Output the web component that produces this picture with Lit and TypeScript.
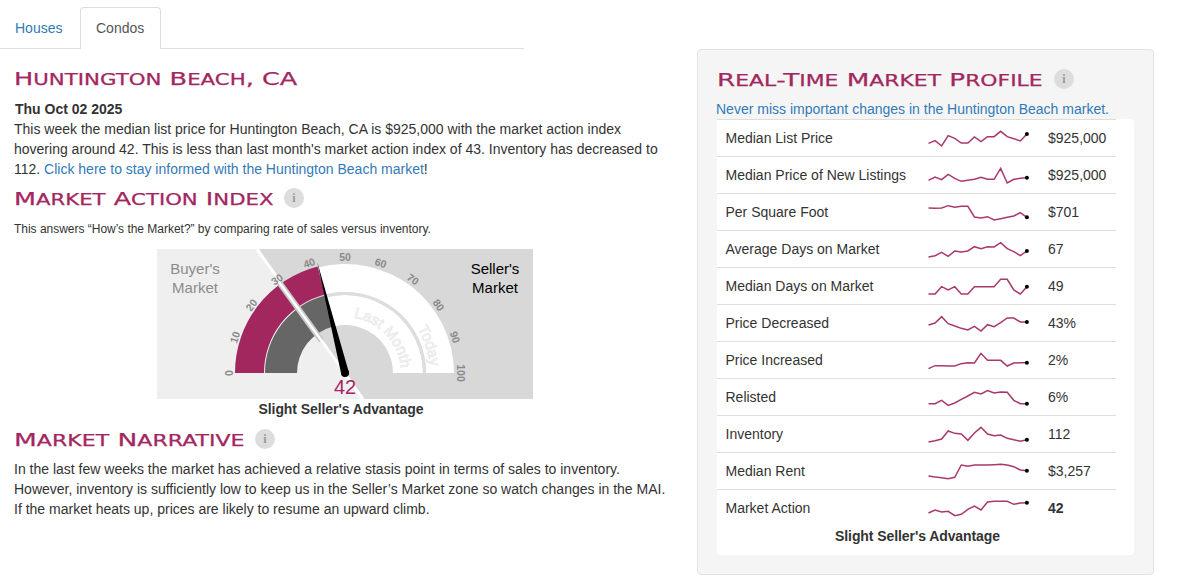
import { LitElement, html, css, svg } from "lit";
import { customElement } from "lit/decorators.js";

const PINK = "#a3275f";

// y values measured as 3x-zoom coordinates, with the row's top in the same units
const ROWS: { label: string; value: string; top: number; ys: number[]; bold?: boolean }[] = [
  { label: "Median List Price", value: "$925,000", top: -3, ys: [67,59,75,44,52,66,66,48,62,47,47,31,47,53,60,39] },
  { label: "Median Price of New Listings", value: "$925,000", top: 108, ys: [178,168,176,160,172,181,178,175,169,175,175,142,186,175,172,170] },
  { label: "Per Square Foot", value: "$701", top: 219, ys: [261,262,261,254,259,256,256,288,291,287,297,293,289,285,275,289] },
  { label: "Average Days on Market", value: "67", top: 330, ys: [408,404,394,406,390,393,390,377,383,377,378,365,383,392,404,390] },
  { label: "Median Days on Market", value: "49", top: -9, ys: [69,69,47,57,47,69,69,47,47,47,47,25,25,57,69,47] },
  { label: "Price Decreased", value: "43%", top: 102, ys: [162,156,137,158,165,172,177,166,180,161,167,155,141,141,153,153] },
  { label: "Price Increased", value: "2%", top: 213, ys: [293,284,284,285,285,278,275,276,247,268,268,268,285,276,275,275] },
  { label: "Relisted", value: "6%", top: 324, ys: [398,398,388,403,396,385,375,364,369,359,366,363,364,388,398,398] },
  { label: "Inventory", value: "112", top: 1, ys: [79,75,70,46,53,55,74,52,35,55,60,58,68,72,77,72] },
  { label: "Median Rent", value: "$3,257", top: 112, ys: [181,184,186,189,185,148,152,148,148,148,147,146,148,153,163,165] },
  { label: "Market Action", value: "42", top: 223, ys: [292,283,289,287,300,296,281,271,283,259,257,257,257,266,262,261], bold: true },
];

const CX = 188;
const CY = 124;

function polar(v: number, r: number): [number, number] {
  const a = Math.PI * (1 - v / 100);
  return [CX + r * Math.cos(a), CY - r * Math.sin(a)];
}

function band(v0: number, v1: number, r0: number, r1: number): string {
  const [ax, ay] = polar(v0, r1);
  const [bx, by] = polar(v1, r1);
  const [cx, cy] = polar(v1, r0);
  const [dx, dy] = polar(v0, r0);
  return `M${ax} ${ay}A${r1} ${r1} 0 0 1 ${bx} ${by}L${cx} ${cy}A${r0} ${r0} 0 0 0 ${dx} ${dy}Z`;
}

function heading(text: string, cls: string) {
  const parts = text.match(/[a-z]+|[^a-z]+/g) ?? [];
  return html`<span class="htext ${cls}">${parts.map((p) => (/^[a-z]/.test(p) ? html`<span class="sm">${p}</span>` : p))}</span>`;
}

function spark(top: number, ys: number[]) {
  const pts = ys.map((y, i) => [0.5 + i * 6.56, (y - top) / 3] as [number, number]);
  const last = pts[pts.length - 1];
  return html`<svg class="spark" width="120" height="36" viewBox="0 0 120 36">
    <polyline points=${pts.map((p) => p.join(",")).join(" ")} fill="none" stroke=${PINK} stroke-width="1.5" stroke-opacity="0.92"></polyline>
    <circle cx=${last[0]} cy=${last[1]} r="2" fill="#000"></circle>
  </svg>`;
}

function gauge() {
  const ticks = [0, 10, 20, 30, 40, 50, 60, 70, 80, 90, 100];
  const [b0x, b0y] = polar(30, 40);
  const [b1x, b1y] = polar(30, 113);
  const n = 42.2;
  const [tx, ty] = polar(n, 115);
  const a = Math.PI * (1 - n / 100);
  const px = Math.sin(a) * 3.9;
  const py = Math.cos(a) * 3.9;
  return html`<svg class="gauge" width="376" height="150" viewBox="0 0 376 150">
    <rect width="376" height="150" fill="#d8d8d8"></rect>
    <polygon points="0,0 100,0 206,150 0,150" fill="#efefef"></polygon>
    <line x1="100" y1="0" x2="206" y2="150" stroke="#fff" stroke-width="3"></line>
    <path d=${band(42, 100, 81, 109)} fill="#fff"></path>
    <path d=${band(42, 100, 48, 78)} fill="#fff"></path>
    <path d=${band(42, 100, 78, 81)} fill="#ddd"></path>
    <path d=${band(0, 42, 81, 110)} fill=${PINK}></path>
    <path d=${band(0, 42, 48, 80)} fill="#666"></path>
    <line x1=${b0x} y1=${b0y} x2=${b1x} y2=${b1y} stroke="#c9c9c9" stroke-width="6"></line>
    <line x1=${b0x} y1=${b0y} x2=${b1x} y2=${b1y} stroke="#fff" stroke-width="2.5"></line>
    ${ticks.map((t) => {
      const [x, y] = polar(t, 116);
      const rot = (t / 100) * 180 - 90;
      return svg`<text class="tick" x=${x} y=${y} transform="rotate(${rot} ${x} ${y})" text-anchor="middle" dominant-baseline="central">${t}</text>`;
    })}
    <path id="todayArc" d="M${CX + 72.4} ${CY - 44.5}A85 85 0 0 1 ${CX + 85} ${CY}" fill="none"></path>
    <path id="lastArc" d="M${CX + 8.8} ${CY - 55.3}A56 56 0 0 1 ${CX + 56} ${CY}" fill="none"></path>
    <text class="curved"><textPath href="#todayArc">Today</textPath></text>
    <text class="curved"><textPath href="#lastArc">Last Month</textPath></text>
    <text class="side buyer" x="38" y="25" text-anchor="middle">Buyer's</text>
    <text class="side buyer" x="38" y="44" text-anchor="middle">Market</text>
    <text class="side seller" x="338" y="25" text-anchor="middle">Seller's</text>
    <text class="side seller" x="338" y="44" text-anchor="middle">Market</text>
    <polygon points="${CX + px},${CY + py} ${CX - px},${CY - py} ${tx},${ty}" fill="#000"></polygon>
    <circle cx=${CX} cy=${CY} r="4" fill="#000"></circle>
    <text class="score" x="188" y="145" text-anchor="middle">42</text>
  </svg>`;
}

@customElement("app-root")
export class AppRoot extends LitElement {
  static styles = css`
    :host {
      display: block;
      width: 1183px;
      height: 586px;
      overflow: hidden;
      font-family: "Liberation Sans", Arial, sans-serif;
      font-size: 14px;
      line-height: 20px;
      color: #333;
      background: #fff;
    }
    a { color: #337ab7; text-decoration: none; }
    .page { display: grid; grid-template-columns: 697px 457px; }
    .left { padding-top: 7px; }
    .tabs {
      display: flex;
      width: 524px;
      height: 42px;
      box-sizing: border-box;
      border-bottom: 1px solid #ddd;
    }
    .tab { padding: 10px 15px; height: 42px; box-sizing: border-box; border: 1px solid transparent; border-bottom: 0; }
    .tab.houses { padding-left: 14px; padding-right: 15px; width: 80px; }
    .tab.active {
      width: 81px;
      color: #555;
      background: #fff;
      border-color: #ddd;
      border-radius: 4px 4px 0 0;
    }
    .content { width: 654px; padding-left: 14px; }
    h2 {
      margin: 0;
      display: flex;
      align-items: center;
      height: 20px;
      font-family: "DejaVu Sans", sans-serif;
      font-weight: 400;
      font-size: 18px;
      line-height: 20px;
      color: #a3275f;
      text-transform: uppercase;
      white-space: nowrap;
      -webkit-text-stroke: 0.25px #a3275f;
    }
    h2 .sm { font-size: 15px; }
    .htext { display: inline-block; height: 20px; line-height: 22px; transform-origin: left center; flex: none; }
    .w-title { width: 283px; transform: scaleX(1.42); }
    .w-mai { width: 258px; transform: scaleX(1.415); }
    .w-narr { width: 229px; transform: scaleX(1.47); }
    .w-prof { width: 325px; transform: scaleX(1.457); }
    .title { margin-top: 19px; }
    .date { margin: 11px 0 0 1px; font-weight: 700; }
    p { margin: 0; }
    .mai { margin-top: 9px; }
    .answers { margin-top: 11px; font-size: 12px; line-height: 20px; letter-spacing: -0.02px; }
    .gauge { display: block; margin: 10px 0 0 143px; }
    .gauge .tick { font: 700 10.5px "Liberation Sans", sans-serif; fill: #8a8a8a; }
    .gauge .side { font: 15px "Liberation Sans", sans-serif; }
    .gauge .buyer { fill: #8c8c8c; }
    .gauge .seller { fill: #000; }
    .gauge .score { font: 20px "Liberation Sans", sans-serif; fill: #a3275f; }
    .gauge .curved { font: 15px "Liberation Sans", sans-serif; fill: #f8f8f8; stroke: #e6e6e6; stroke-width: 0.6; }
    .caption { font-weight: 700; text-align: center; letter-spacing: -0.08px; }
    .narr-head { margin-top: 10px; }
    .narrative { margin-top: 10px; }
    .info {
      display: inline-flex;
      align-items: center;
      justify-content: center;
      flex: none;
      width: 20px;
      height: 20px;
      margin-left: 12px;
      border-radius: 50%;
      background: #ddd;
      color: #999;
      font: 700 12px "Liberation Serif", serif;
      text-transform: none;
      -webkit-text-stroke: 0;
    }
    .well {
      margin-top: 49px;
      box-sizing: border-box;
      height: 526px;
      padding: 19px;
      background: #f5f5f5;
      border: 1px solid #e3e3e3;
      border-radius: 4px;
    }
    .never { display: block; margin: 10px 0 0 -1px; line-height: 20px; height: 20px; }
    .box { background: #fff; border-radius: 4px; height: 436px; }
    .row {
      width: 399px;
      height: 37px;
      box-sizing: border-box;
      display: grid;
      grid-template-columns: 202.5px 120px 1fr;
      align-items: center;
      padding-left: 8.5px;
      border-top: 1px solid #ddd;
    }
    .spark { display: block; }
    .box .caption { width: 401px; }
    .strong { font-weight: 700; }
  `;

  render() {
    return html`<div class="page">
      <div class="left">
        <div class="tabs">
          <a class="tab houses" href="#">Houses</a>
          <div class="tab active">Condos</div>
        </div>
        <div class="content">
          <h2 class="title">${heading("Huntington Beach, CA", "w-title")}</h2>
          <div class="date">Thu Oct 02 2025</div>
          <p>This week the median list price for Huntington Beach, CA is $925,000 with the market action index hovering around 42. This is less than last month's market action index of 43. Inventory has decreased to 112. <a href="#">Click here to stay informed with the Huntington Beach market</a>!</p>
          <h2 class="mai">${heading("Market Action Index", "w-mai")}<span class="info">i</span></h2>
          <div class="answers">This answers “How’s the Market?” by comparing rate of sales versus inventory.</div>
          ${gauge()}
          <div class="caption">Slight Seller's Advantage</div>
          <h2 class="narr-head">${heading("Market Narrative", "w-narr")}<span class="info">i</span></h2>
          <p class="narrative">In the last few weeks the market has achieved a relative stasis point in terms of sales to inventory. However, inventory is sufficiently low to keep us in the Seller’s Market zone so watch changes in the MAI. If the market heats up, prices are likely to resume an upward climb.</p>
        </div>
      </div>
      <aside class="well">
        <h2>${heading("Real-Time Market Profile", "w-prof")}<span class="info">i</span></h2>
        <a class="never" href="#">Never miss important changes in the Huntington Beach market.</a>
        <div class="box">
          ${ROWS.map(
            (r) => html`<div class="row">
              <span>${r.label}</span>
              ${spark(r.top, r.ys)}
              <span class=${r.bold ? "strong" : ""}>${r.value}</span>
            </div>`
          )}
          <div class="caption">Slight Seller's Advantage</div>
        </div>
      </aside>
    </div>`;
  }
}
